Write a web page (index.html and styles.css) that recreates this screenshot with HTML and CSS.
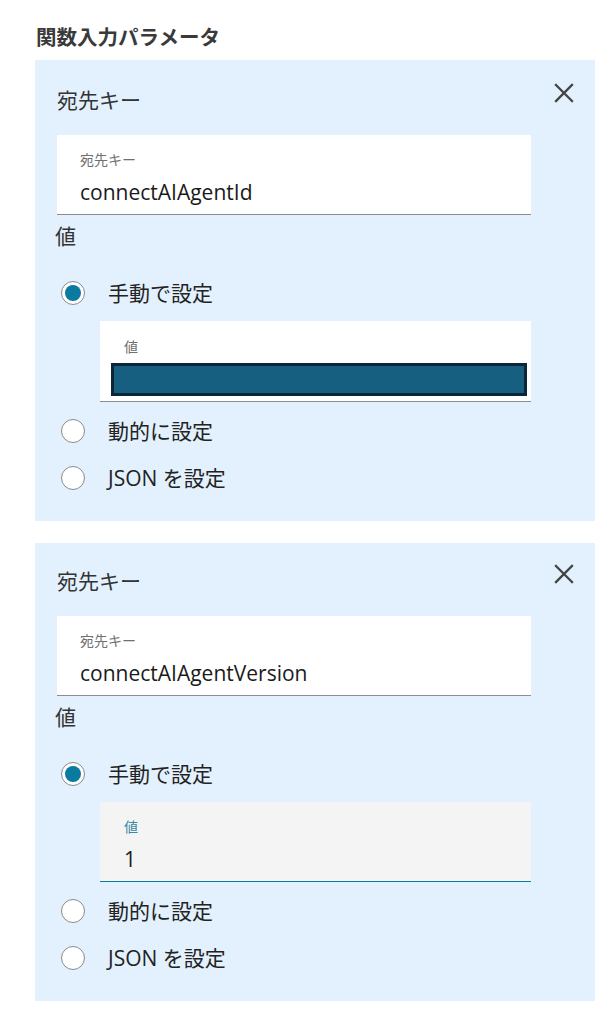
FILE: index.html
```html
<!DOCTYPE html>
<html lang="ja">
<head>
<meta charset="utf-8">
<title>関数入力パラメータ</title>
<link rel="stylesheet" href="styles.css">
</head>
<body>
<main class="page">
  <h2 class="heading">関数入力パラメータ</h2>

  <section class="panel">
    <div class="panel-head">
      <div class="panel-title">宛先キー</div>
      <button class="close" aria-label="削除">
        <svg width="20" height="20" viewBox="0 0 20 20"><path d="M2 2 L18 18 M18 2 L2 18" stroke="#444" stroke-width="2.3" stroke-linecap="square" fill="none"/></svg>
      </button>
    </div>
    <div class="field">
      <div class="field-label">宛先キー</div>
      <div class="field-value">connectAIAgentId</div>
    </div>
    <div class="value-title">値</div>
    <div class="radios">
      <label class="radio-row"><span class="radio checked"></span><span class="radio-text">手動で設定</span></label>
      <div class="field inner">
        <div class="field-label">値</div>
        <div class="redacted"></div>
      </div>
      <label class="radio-row second"><span class="radio"></span><span class="radio-text">動的に設定</span></label>
      <label class="radio-row third"><span class="radio"></span><span class="radio-text">JSON を設定</span></label>
    </div>
  </section>

  <section class="panel panel-b">
    <div class="panel-head">
      <div class="panel-title">宛先キー</div>
      <button class="close" aria-label="削除">
        <svg width="20" height="20" viewBox="0 0 20 20"><path d="M2 2 L18 18 M18 2 L2 18" stroke="#444" stroke-width="2.3" stroke-linecap="square" fill="none"/></svg>
      </button>
    </div>
    <div class="field">
      <div class="field-label">宛先キー</div>
      <div class="field-value">connectAIAgentVersion</div>
    </div>
    <div class="value-title">値</div>
    <div class="radios">
      <label class="radio-row"><span class="radio checked"></span><span class="radio-text">手動で設定</span></label>
      <div class="field inner focused">
        <div class="field-label">値</div>
        <div class="field-value">1</div>
      </div>
      <label class="radio-row second"><span class="radio"></span><span class="radio-text">動的に設定</span></label>
      <label class="radio-row third"><span class="radio"></span><span class="radio-text">JSON を設定</span></label>
    </div>
  </section>
</main>
</body>
</html>
```

FILE: styles.css
```css
* { box-sizing: border-box; }

body {
  margin: 0;
  background: #ffffff;
  font-family: "Open Sans", "Noto Sans CJK JP", sans-serif;
  color: #222;
}

.page {
  padding: 0 17px 0 35px;
}

.heading {
  margin: 0;
  padding-top: 23px;
  height: 60px;
  font-size: 20.5px;
  line-height: 28px;
  font-weight: 700;
  color: #3a3a3a;
  padding-left: 1px;
}

.panel {
  background: #e2f1fd;
  padding: 26px 22px 29px 22px;
  margin-bottom: 22px;
}

.panel-b {
  padding-top: 24px;
}

.panel-head {
  display: flex;
  justify-content: space-between;
  align-items: flex-start;
}

.panel-title {
  font-size: 21px;
  line-height: 28px;
  color: #333;
}

.close {
  border: 0;
  background: none;
  padding: 0;
  margin: -3px -1px 0 0;
  width: 20px;
  height: 20px;
  display: flex;
}

.field {
  width: 474px;
  margin-top: 21px;
  background: #ffffff;
  border-bottom: 1px solid #8d8d8d;
  padding: 15px 0 8px 23px;
}

.field-label {
  font-size: 14px;
  line-height: 20px;
  color: #707070;
}

.field-value {
  margin-top: 8px;
  font-size: 21px;
  line-height: 28px;
  color: #1a1a1a;
}

.value-title {
  margin-top: 7px;
  font-size: 21px;
  line-height: 28px;
  color: #333;
  margin-left: -2px;
}

.radios {
  margin-top: 29px;
}

.radio-row {
  display: flex;
  align-items: center;
  height: 28px;
  padding-left: 4px;
}

.radio-row.second { margin-top: 15px; }
.radio-row.third { margin-top: 19px; }

.radio {
  width: 24px;
  height: 24px;
  border-radius: 50%;
  border: 1px solid #8a8a8a;
  background: #ffffff;
  flex: none;
  display: flex;
  align-items: center;
  justify-content: center;
}

.radio.checked::after {
  content: "";
  width: 16px;
  height: 16px;
  border-radius: 50%;
  background: #0a7aa1;
}

.radio-text {
  margin-left: 23px;
  font-size: 21px;
  line-height: 28px;
  color: #222;
}

.field.inner {
  width: 431px;
  margin: 14px 0 0 43px;
  padding: 16px 4px 5px 11px;
}

.field.inner .field-label {
  padding-left: 13px;
}

.redacted {
  margin-top: 6px;
  height: 33px;
  background: #165f80;
  border: 3px solid #0b2636;
}

.field.inner.focused {
  background: #f4f4f4;
  border-bottom-color: #0a7aa1;
  padding: 15px 0 8px 24px;
}

.field.inner.focused .field-label {
  padding-left: 0;
  color: #3b89a8;
}
```
